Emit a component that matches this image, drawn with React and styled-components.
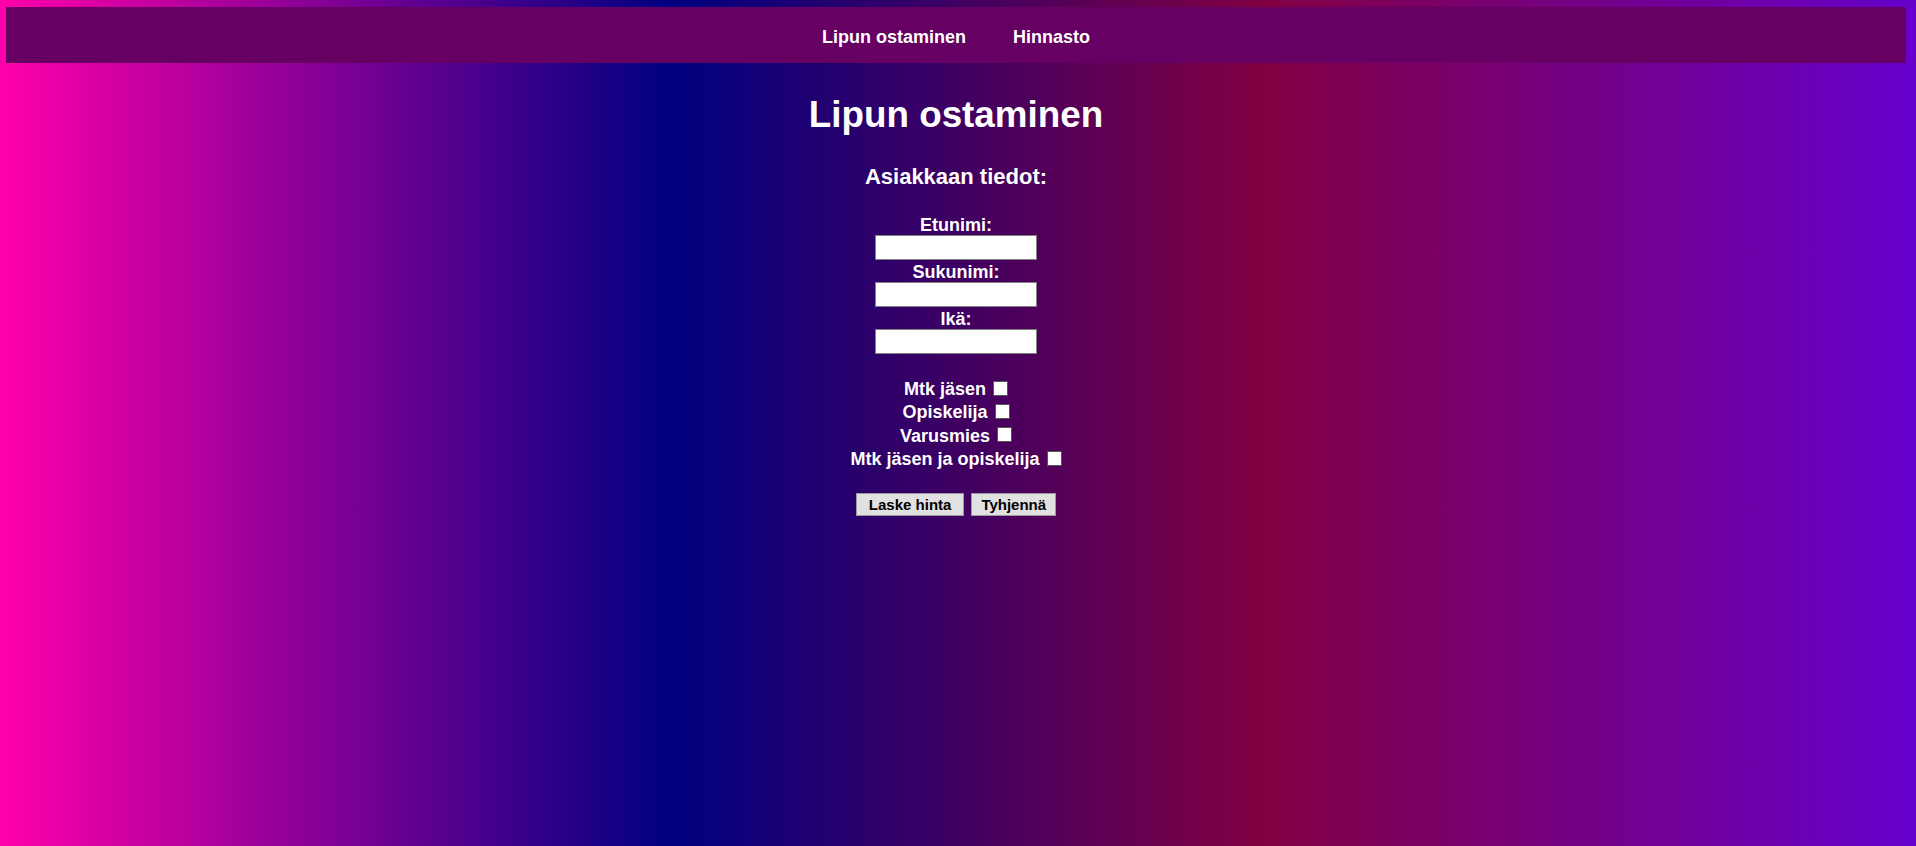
import React from "react";
import styled, { createGlobalStyle } from "styled-components";

const Global = createGlobalStyle`
  html, body { margin: 0; padding: 0; }
  body { font-family: "Liberation Sans", Arial, sans-serif; }
`;

const Page = styled.div`
  min-height: 100vh;
  box-sizing: border-box;
  padding: 7px 4px 1px 0;
  background: linear-gradient(to right, #ff00aa 0%, #000080 35%, #820042 66%, #6600cc 100%);
  color: #fff;
  font-weight: bold;
  text-align: center;
  overflow: hidden;
`;

const NavBar = styled.nav`
  margin: 0 6px;
  height: 56px;
  box-sizing: border-box;
  padding-top: 20px;
  background: #660062;
  display: flex;
  justify-content: center;
  align-items: flex-start;
  gap: 47px;
`;

const NavLink = styled.a`
  color: #fff;
  text-decoration: none;
  font-size: 18px;
  line-height: 21px;
  font-weight: bold;
`;

const Title = styled.h1`
  margin: 31px 0 0;
  font-size: 36.8px;
  line-height: 42px;
  font-weight: bold;
`;

const SubTitle = styled.h3`
  margin: 28px 0 0;
  font-size: 22px;
  line-height: 25px;
  font-weight: bold;
`;

const Form = styled.form`
  margin-top: 26px;
  display: flex;
  flex-direction: column;
  align-items: center;
`;

const FieldLabel = styled.label`
  display: block;
  font-size: 18px;
  line-height: 20px;
  margin-top: ${(p) => (p.$first ? "0" : "2px")};
`;

const TextInput = styled.input`
  display: block;
  box-sizing: border-box;
  width: 162px;
  height: 25px;
  margin: 0;
  border: 1px solid #808080;
  background: #fff;
  padding: 1px 2px;
`;

const Checks = styled.div`
  margin-top: 24px;
  display: flex;
  flex-direction: column;
  align-items: center;
`;

const CheckRow = styled.label`
  display: flex;
  align-items: center;
  justify-content: center;
  height: 23.3px;
  font-size: 18px;
  line-height: 21px;
`;

const CheckBox = styled.input.attrs({ type: "checkbox" })`
  appearance: none;
  -webkit-appearance: none;
  width: 15px;
  height: 15px;
  margin: 0 0 3px 7px;
  background: #fff;
  border: 1px solid #555;
  box-sizing: border-box;
`;

const Buttons = styled.div`
  margin-top: 22px;
  display: flex;
  justify-content: center;
  gap: 7px;
`;

const Button = styled.button`
  box-sizing: border-box;
  height: 23px;
  padding: 0 ${(p) => p.$pad}px;
  font-family: "Liberation Sans", Arial, sans-serif;
  font-size: 15px;
  font-weight: bold;
  color: #000;
  background: #e1e1e1;
  border: 1px solid #9a9a9a;
  border-radius: 0;
  line-height: 21px;
`;

export default function App() {
  return (
    <>
      <Global />
      <Page>
        <NavBar>
          <NavLink href="#">Lipun ostaminen</NavLink>
          <NavLink href="#">Hinnasto</NavLink>
        </NavBar>
        <Title>Lipun ostaminen</Title>
        <SubTitle>Asiakkaan tiedot:</SubTitle>
        <Form onSubmit={(e) => e.preventDefault()}>
          <FieldLabel $first>Etunimi:</FieldLabel>
          <TextInput type="text" />
          <FieldLabel>Sukunimi:</FieldLabel>
          <TextInput type="text" />
          <FieldLabel>Ikä:</FieldLabel>
          <TextInput type="text" />
          <Checks>
            <CheckRow>Mtk jäsen<CheckBox /></CheckRow>
            <CheckRow>Opiskelija<CheckBox /></CheckRow>
            <CheckRow>Varusmies<CheckBox /></CheckRow>
            <CheckRow>Mtk jäsen ja opiskelija<CheckBox /></CheckRow>
          </Checks>
          <Buttons>
            <Button type="button" $pad={12}>Laske hinta</Button>
            <Button type="reset" $pad={9}>Tyhjennä</Button>
          </Buttons>
        </Form>
      </Page>
    </>
  );
}
